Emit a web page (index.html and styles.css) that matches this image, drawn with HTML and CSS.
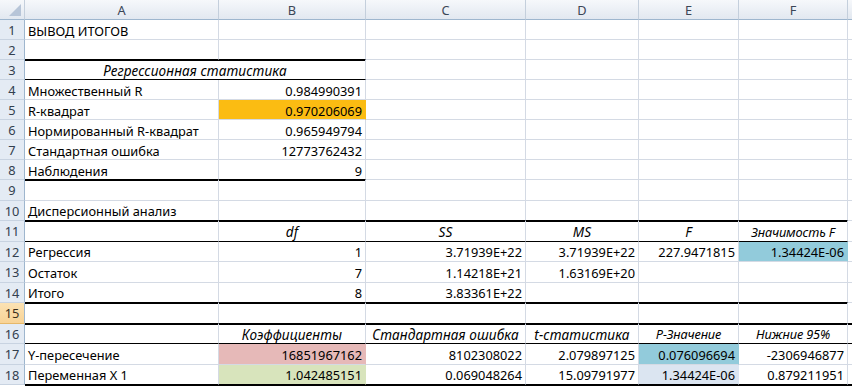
FILE: index.html
```html
<!DOCTYPE html>
<html lang="ru">
<head>
<meta charset="utf-8">
<title>Вывод итогов</title>
<link rel="stylesheet" href="styles.css">
</head>
<body>
<div class="sheet">
  <div class="row hdr">
    <div class="c corner"></div>
    <div class="c ch">A</div>
    <div class="c ch">B</div>
    <div class="c ch">C</div>
    <div class="c ch">D</div>
    <div class="c ch">E</div>
    <div class="c ch">F</div>
    <div class="c ch"></div>
  </div>

  <div class="row">
    <div class="c rh">1</div>
    <div class="c">ВЫВОД ИТОГОВ</div>
    <div class="c"></div><div class="c"></div><div class="c"></div><div class="c"></div><div class="c"></div><div class="c"></div>
  </div>

  <div class="row">
    <div class="c rh">2</div>
    <div class="c tb"></div>
    <div class="c tb"></div>
    <div class="c"></div><div class="c"></div><div class="c"></div><div class="c"></div><div class="c"></div>
  </div>

  <div class="row">
    <div class="c rh">3</div>
    <div class="c hd span2 bb">Регрессионная статистика</div>
    <div class="c"></div><div class="c"></div><div class="c"></div><div class="c"></div><div class="c"></div>
  </div>

  <div class="row">
    <div class="c rh">4</div>
    <div class="c">Множественный R</div>
    <div class="c n">0.984990391</div>
    <div class="c"></div><div class="c"></div><div class="c"></div><div class="c"></div><div class="c"></div>
  </div>

  <div class="row">
    <div class="c rh">5</div>
    <div class="c">R-квадрат</div>
    <div class="c n fill orange">0.970206069</div>
    <div class="c"></div><div class="c"></div><div class="c"></div><div class="c"></div><div class="c"></div>
  </div>

  <div class="row">
    <div class="c rh">6</div>
    <div class="c">Нормированный R-квадрат</div>
    <div class="c n">0.965949794</div>
    <div class="c"></div><div class="c"></div><div class="c"></div><div class="c"></div><div class="c"></div>
  </div>

  <div class="row">
    <div class="c rh">7</div>
    <div class="c">Стандартная ошибка</div>
    <div class="c n">12773762432</div>
    <div class="c"></div><div class="c"></div><div class="c"></div><div class="c"></div><div class="c"></div>
  </div>

  <div class="row">
    <div class="c rh">8</div>
    <div class="c tb">Наблюдения</div>
    <div class="c n tb">9</div>
    <div class="c"></div><div class="c"></div><div class="c"></div><div class="c"></div><div class="c"></div>
  </div>

  <div class="row t">
    <div class="c rh">9</div>
    <div class="c"></div><div class="c"></div><div class="c"></div><div class="c"></div><div class="c"></div><div class="c"></div><div class="c"></div>
  </div>

  <div class="row t">
    <div class="c rh">10</div>
    <div class="c tb">Дисперсионный анализ</div>
    <div class="c tb"></div><div class="c tb"></div><div class="c tb"></div><div class="c tb"></div><div class="c tb"></div>
    <div class="c"></div>
  </div>

  <div class="row t">
    <div class="c rh">11</div>
    <div class="c bb"></div>
    <div class="c hd bb">df</div>
    <div class="c hd bb">SS</div>
    <div class="c hd bb">MS</div>
    <div class="c hd bb">F</div>
    <div class="c hd sm bb">Значимость F</div>
    <div class="c"></div>
  </div>

  <div class="row t">
    <div class="c rh">12</div>
    <div class="c">Регрессия</div>
    <div class="c n">1</div>
    <div class="c n">3.71939E+22</div>
    <div class="c n">3.71939E+22</div>
    <div class="c n">227.9471815</div>
    <div class="c n fill blue">1.34424E-06</div>
    <div class="c"></div>
  </div>

  <div class="row t">
    <div class="c rh">13</div>
    <div class="c">Остаток</div>
    <div class="c n">7</div>
    <div class="c n">1.14218E+21</div>
    <div class="c n">1.63169E+20</div>
    <div class="c"></div><div class="c"></div><div class="c"></div>
  </div>

  <div class="row t">
    <div class="c rh">14</div>
    <div class="c tb">Итого</div>
    <div class="c n tb">8</div>
    <div class="c n tb">3.83361E+22</div>
    <div class="c tb"></div><div class="c tb"></div><div class="c tb"></div>
    <div class="c"></div>
  </div>

  <div class="row t">
    <div class="c rh sel">15</div>
    <div class="c tb"></div><div class="c tb"></div><div class="c tb"></div><div class="c tb"></div><div class="c tb"></div><div class="c tb"></div><div class="c tb"></div>
  </div>

  <div class="row t">
    <div class="c rh">16</div>
    <div class="c bb"></div>
    <div class="c hd bb">Коэффициенты</div>
    <div class="c hd bb">Стандартная ошибка</div>
    <div class="c hd bb">t-статистика</div>
    <div class="c hd sm bb">P-Значение</div>
    <div class="c hd sm bb">Нижние 95%</div>
    <div class="c hd sm bb">Верхние 95%</div>
  </div>

  <div class="row t">
    <div class="c rh">17</div>
    <div class="c">Y-пересечение</div>
    <div class="c n fill pink">16851967162</div>
    <div class="c n">8102308022</div>
    <div class="c n">2.079897125</div>
    <div class="c n fill blue">0.076096694</div>
    <div class="c n">-2306946877</div>
    <div class="c"></div>
  </div>

  <div class="row t">
    <div class="c rh">18</div>
    <div class="c tb">Переменная X 1</div>
    <div class="c n tb fill green">1.042485151</div>
    <div class="c n tb">0.069048264</div>
    <div class="c n tb">15.09791977</div>
    <div class="c n tb fill lblue">1.34424E-06</div>
    <div class="c n tb">0.879211951</div>
    <div class="c tb"></div>
  </div>
</div>
</body>
</html>
```

FILE: styles.css
```css
html, body {
  margin: 0;
  padding: 0;
}

body {
  width: 852px;
  height: 388px;
  overflow: hidden;
  background: #ffffff;
  font-family: "Noto Sans", "Liberation Sans", sans-serif;
  font-size: 12.8px;
  color: #000000;
}

.sheet {
  width: 940px;
}

.row {
  display: grid;
  grid-template-columns: 25px 194px 147px 160px 113px 100px 109px 86px;
  height: 20px;
}

.row.t {
  height: 20.5px;
}

.c {
  box-sizing: border-box;
  border-right: 1px solid #d4dae4;
  border-bottom: 1px solid #d4dae4;
  padding: 3px 3px 0 3px;
  display: flex;
  align-items: center;
  white-space: nowrap;
  line-height: 1;
  min-width: 0;
}

.n {
  justify-content: flex-end;
}

.hd {
  justify-content: center;
  font-style: italic;
  font-size: 13.6px;
  letter-spacing: 0.1px;
}

.hd.sm {
  font-size: 12.8px;
  letter-spacing: -0.15px;
}

.span2 {
  grid-column: span 2;
}

.bb {
  border-bottom-color: #000000;
}

.tb {
  border-bottom-color: #000000;
  box-shadow: 0 1px 0 #000000;
}

/* column headers */
.hdr .c {
  background: linear-gradient(#f6f8fb, #e2e8f0);
  border-right-color: #c4cfdc;
  border-bottom-color: #9eb6ce;
  justify-content: center;
  color: #3b4656;
  padding: 1px 0 0 0;
}

.corner {
  position: relative;
}

.corner::after {
  content: "";
  position: absolute;
  right: 3px;
  bottom: 3px;
  width: 12px;
  height: 12px;
  background: #b7c5d8;
  clip-path: polygon(100% 0, 100% 100%, 0 100%);
}

/* row headers */
.rh {
  background: #e4ebf4;
  border-right-color: #9eb6ce;
  border-bottom-color: #c8d3e1;
  justify-content: center;
  color: #33404f;
  padding: 2px 0 0 0;
}

.rh.sel {
  background: linear-gradient(#fbe2b4, #f8d396);
  border-bottom-color: #e6b86a;
  color: #3b2f1c;
}

/* fills */
.fill {
  border-right-color: transparent;
}

.orange {
  background: #fbbc12;
}

.blue {
  background: #92cbdb;
}

.pink {
  background: #e6b9b8;
}

.green {
  background: #d8e4bc;
}

.lblue {
  background: #dbe5f1;
}
```
